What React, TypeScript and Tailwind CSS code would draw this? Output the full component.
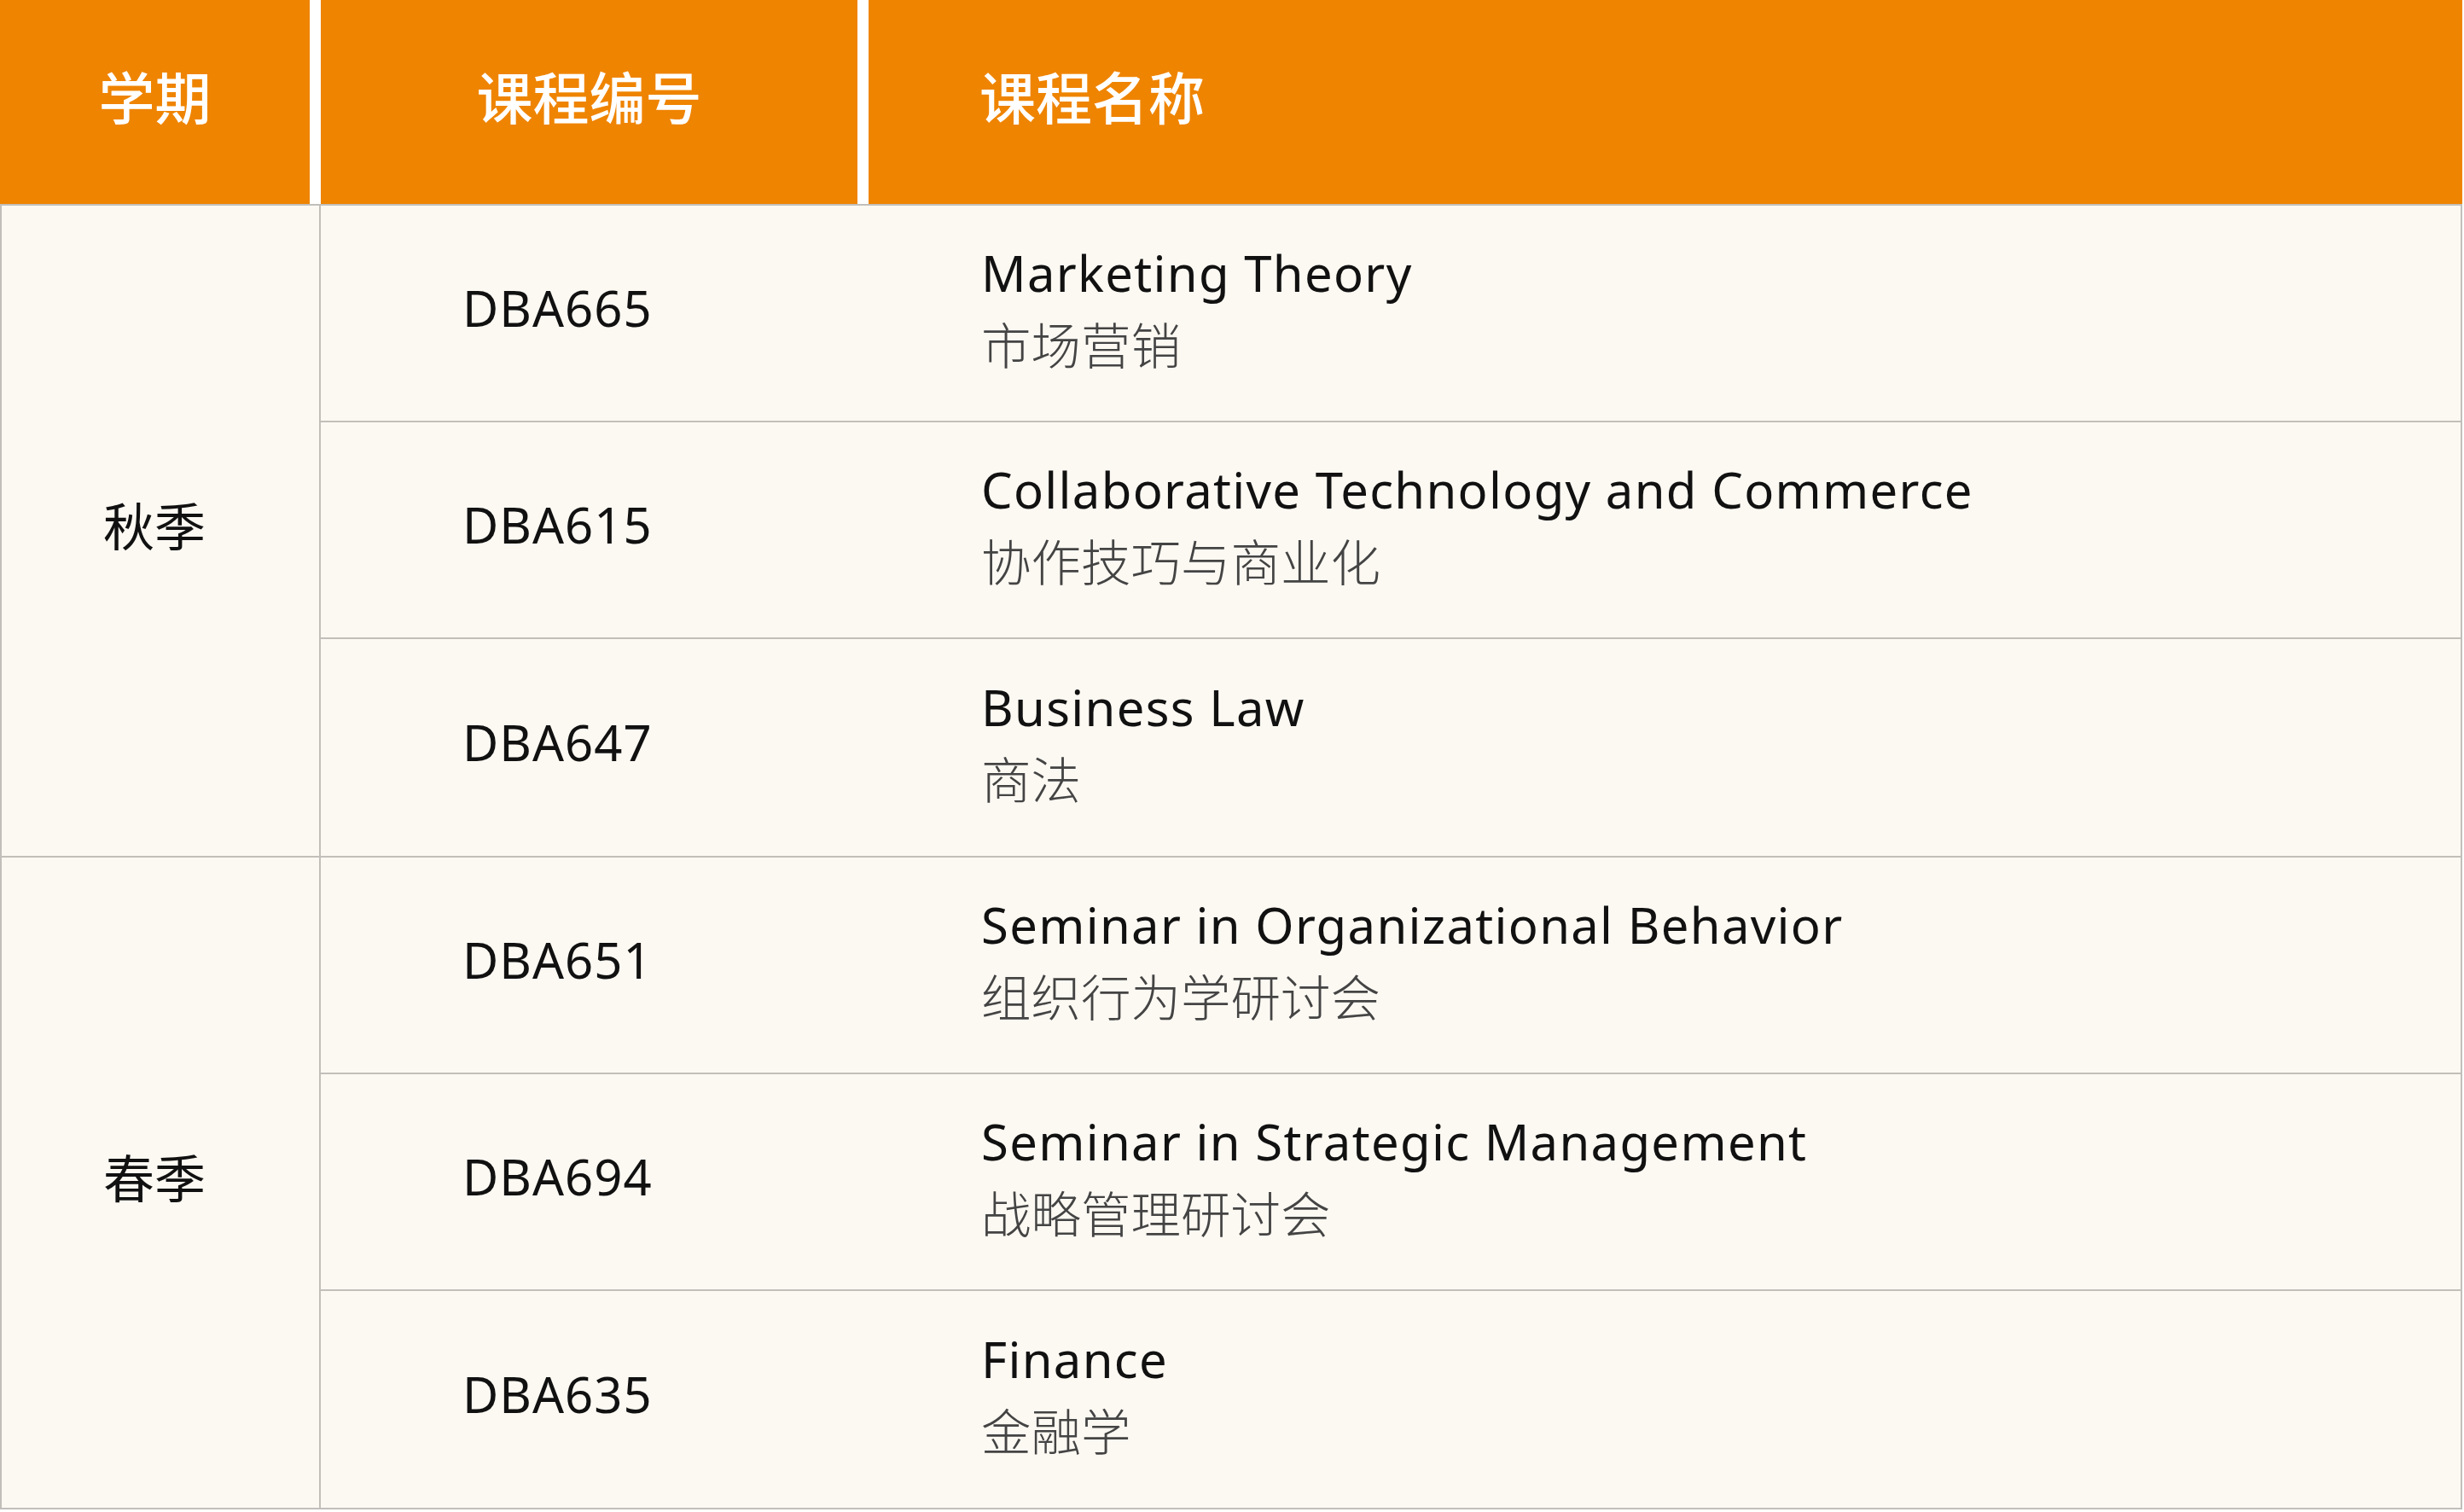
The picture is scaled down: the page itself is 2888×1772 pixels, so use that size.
import React from "react";

interface Course {
  code: string;
  name: string;
  cn: string;
}

interface Term {
  label: string;
  courses: Course[];
}

const terms: Term[] = [
  {
    label: "秋季",
    courses: [
      { code: "DBA665", name: "Marketing Theory", cn: "市场营销" },
      { code: "DBA615", name: "Collaborative Technology and Commerce", cn: "协作技巧与商业化" },
      { code: "DBA647", name: "Business Law", cn: "商法" },
    ],
  },
  {
    label: "春季",
    courses: [
      { code: "DBA651", name: "Seminar in Organizational Behavior", cn: "组织行为学研讨会" },
      { code: "DBA694", name: "Seminar in Strategic Management", cn: "战略管理研讨会" },
      { code: "DBA635", name: "Finance", cn: "金融学" },
    ],
  },
];

const font = { fontFamily: '"Noto Sans", "Noto Sans CJK SC", sans-serif' };

export default function App() {
  return (
    <div className="w-[2886px] bg-white" style={font}>
      {/* header */}
      <div className="flex h-[239px] gap-[13px] bg-white text-[66px] font-medium text-white">
        <div className="flex w-[363px] items-center justify-center bg-[#ef8400] pb-[10px]">学期</div>
        <div className="flex w-[629px] items-center justify-center bg-[#ef8400] pb-[10px]">课程编号</div>
        <div className="flex flex-1 items-center bg-[#ef8400] pb-[10px] pl-[130px]">课程名称</div>
      </div>

      {/* body */}
      <div className="flex flex-col border-2 border-[#c2bfba] bg-[#fcf8f2]">
        {terms.map((term, ti) => (
          <div
            key={term.label}
            className={`flex ${ti < terms.length - 1 ? "border-b-2 border-[#c2bfba]" : ""}`}
          >
            <div className="flex w-[374px] items-center justify-center border-r-2 border-[#c2bfba] pr-[14px] pb-[10px] text-[60px] text-[#111]">
              {term.label}
            </div>
            <div className="flex flex-1 flex-col">
              {term.courses.map((c, ci) => (
                <div
                  key={c.code}
                  className={`grid h-[254px] grid-cols-[774px_1fr] items-center pb-[10px] ${
                    ci < term.courses.length - 1 ? "border-b-2 border-[#c2bfba]" : ""
                  }`}
                >
                  <div className="pb-[4px] pl-[166px] text-[58px] tracking-[1px] text-[#111]">{c.code}</div>
                  <div className="flex flex-col leading-[84px]">
                    <span className="text-[58px] tracking-[1.3px] text-[#111]">{c.name}</span>
                    <span className="text-[58.5px] font-light text-[#444]">{c.cn}</span>
                  </div>
                </div>
              ))}
            </div>
          </div>
        ))}
      </div>
    </div>
  );
}
